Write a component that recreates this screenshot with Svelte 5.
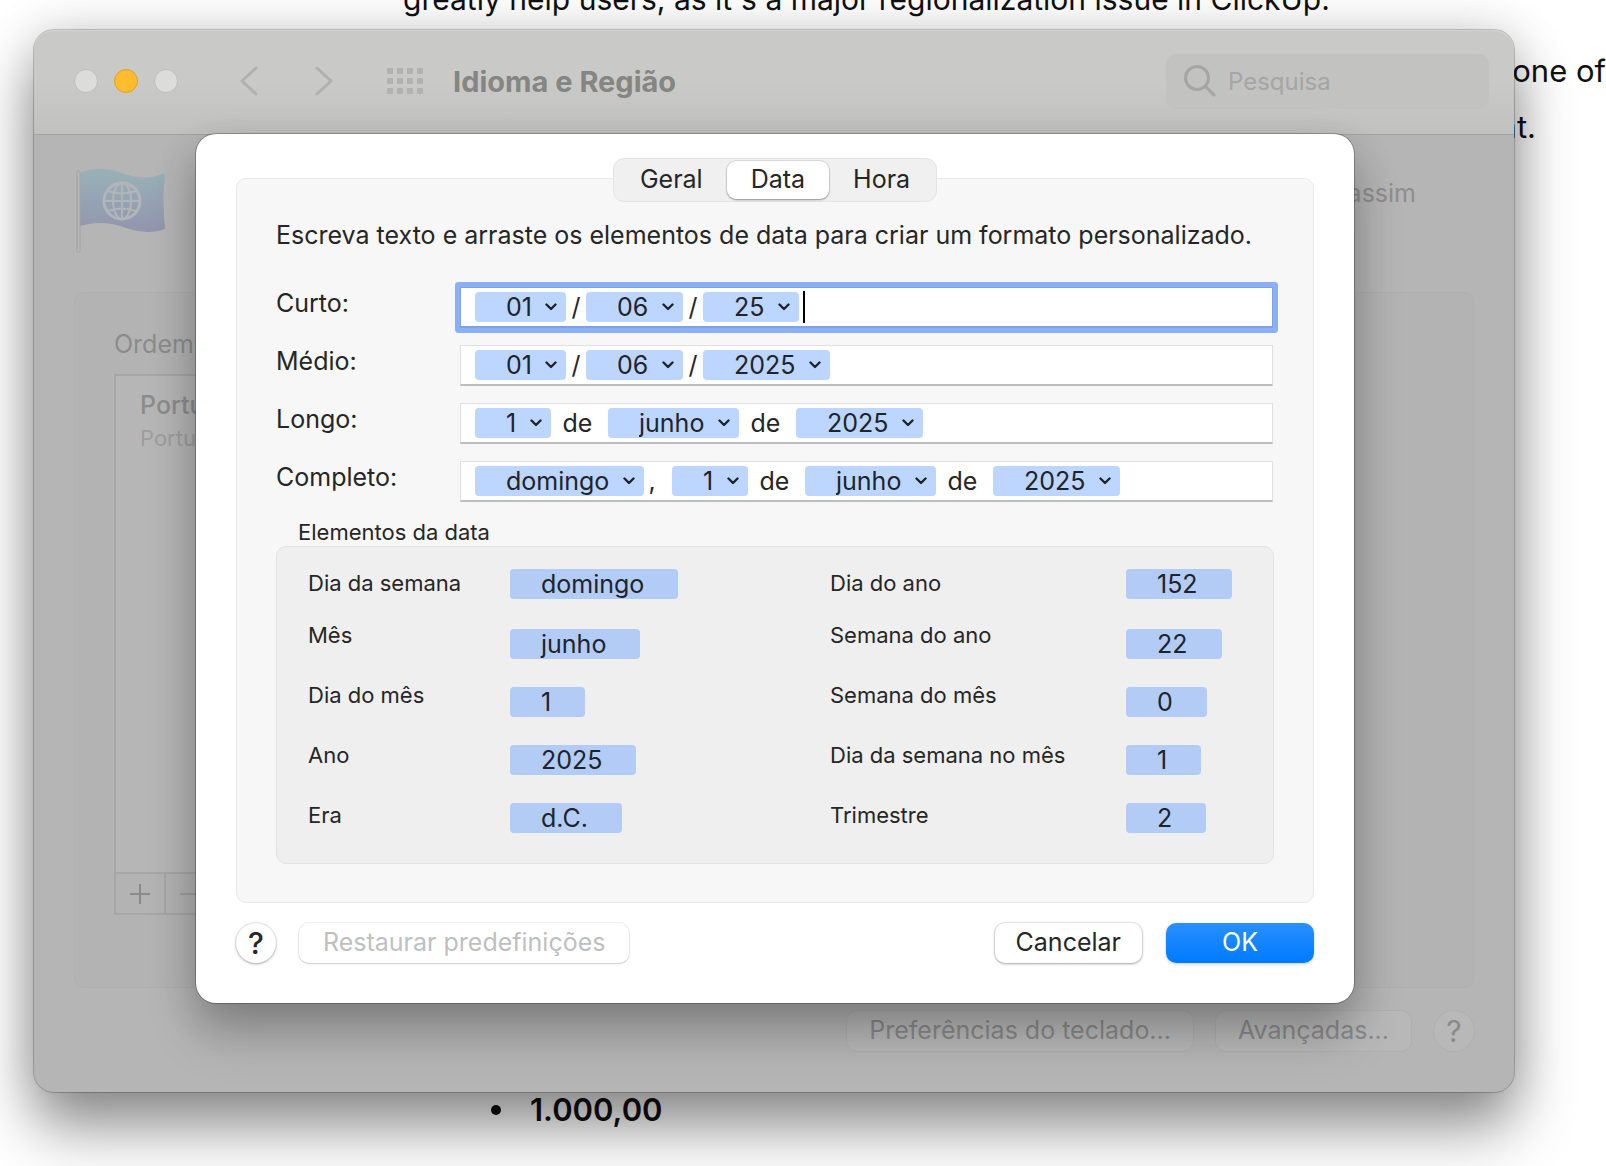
<script>
	const tabs = ['Geral', 'Data', 'Hora'];
	let activeTab = $state('Data');

	// each format is a list of draggable tokens with plain text between them
	const formats = [
		{ id: 'curto', label: 'Curto:', focused: true, parts: [{ token: '01' }, { text: '/' }, { token: '06' }, { text: '/' }, { token: '25' }] },
		{ id: 'medio', label: 'Médio:', parts: [{ token: '01' }, { text: '/' }, { token: '06' }, { text: '/' }, { token: '2025' }] },
		{ id: 'longo', label: 'Longo:', parts: [{ token: '1' }, { text: 'de', word: true }, { token: 'junho' }, { text: 'de', word: true }, { token: '2025' }] },
		{
			id: 'completo',
			label: 'Completo:',
			parts: [{ token: 'domingo' }, { text: ',', comma: true }, { token: '1' }, { text: 'de', word: true }, { token: 'junho' }, { text: 'de', word: true }, { token: '2025' }]
		}
	];

	const leftElements = [
		['Dia da semana', 'domingo'],
		['Mês', 'junho'],
		['Dia do mês', '1'],
		['Ano', '2025'],
		['Era', 'd.C.']
	];

	const rightElements = [
		['Dia do ano', '152'],
		['Semana do ano', '22'],
		['Semana do mês', '0'],
		['Dia da semana no mês', '1'],
		['Trimestre', '2']
	];
</script>

{#snippet elementColumns(items, group)}
	<div class="elements {group}">
		<div class="names">
			{#each items as [name]}
				<span>{name}</span>
			{/each}
		</div>
		<div class="values" role="list">
			{#each items as [name, value]}
				<span class="chip" draggable="true" role="listitem" aria-label={name}>{value}</span>
			{/each}
		</div>
	</div>
{/snippet}

<div class="desktop">
	<article class="page">
		<p class="intro">greatly help users, as it's a major regionalization issue in ClickUp.</p>
		<p class="line-end">one of</p>
		<p class="line-end short">nt.</p>
		<ul>
			<li>1.000,00</li>
		</ul>
	</article>

	<div class="window">
		<header class="titlebar">
			<div class="lights">
				<button aria-label="Fechar"></button>
				<button class="minimize" aria-label="Minimizar"></button>
				<button aria-label="Ampliar"></button>
			</div>
			<div class="nav">
				<button aria-label="Voltar">
					<svg width="18" height="30" viewBox="0 0 18 30"><path d="M16 2 2 15l14 13" /></svg>
				</button>
				<button aria-label="Avançar">
					<svg width="18" height="30" viewBox="0 0 18 30"><path d="m2 2 14 13L2 28" /></svg>
				</button>
			</div>
			<button class="all" aria-label="Mostrar tudo">
				<svg width="36" height="26" viewBox="0 0 36 26">
					{#each [0, 10, 20] as y}
						{#each [0, 10, 20, 30] as x}
							<rect {x} {y} width="6" height="6" rx="1" />
						{/each}
					{/each}
				</svg>
			</button>
			<h1>Idioma e Região</h1>
			<label class="search">
				<svg width="32" height="32" viewBox="0 0 32 32"><circle cx="13" cy="13" r="11.5" /><path d="m21.5 21.5 8.5 8.5" /></svg>
				<input type="text" placeholder="Pesquisa" aria-label="Pesquisa" />
			</label>
		</header>

		<div class="body">
			<div class="summary">
				<svg class="flag" width="92" height="86" viewBox="0 0 92 86">
					<defs>
						<linearGradient id="cloth" x1="0" y1="0" x2="0" y2="1">
							<stop offset="0" stop-color="#93b2b7" />
							<stop offset="0.5" stop-color="#8f9fb4" />
							<stop offset="1" stop-color="#8a8eac" />
						</linearGradient>
					</defs>
					<path d="M4 5C18-1 32 0 46 5s27 7 43 0c-2 18-2 36 0 56-14 5-28 3-42-2S19 54 4 58Z" fill="url(#cloth)" />
					<rect x="1" y="3" width="3" height="81" rx="1" fill="#b9b9b9" stroke="#a0a0a0" />
					<g fill="none" stroke="#b0b6ba" stroke-width="2">
						<circle cx="46" cy="33" r="18" stroke-width="3" />
						<ellipse cx="46" cy="33" rx="9" ry="18" />
						<path d="M46 15v36M28 33h36M32 23q14 5 28 0M32 43q14-5 28 0" />
					</g>
				</svg>
				<span>assim</span>
			</div>

			<section class="languages">
				<h2>Ordem</h2>
				<div class="list">
					<strong>Portu</strong>
					<small>Portu</small>
				</div>
				<div class="list-buttons">
					<button aria-label="Adicionar"><svg width="22" height="22" viewBox="0 0 22 22"><path d="M11 1v20M1 11h20" /></svg></button>
					<button class="off" aria-label="Remover"><svg width="22" height="22" viewBox="0 0 22 22"><path d="M1 11h20" /></svg></button>
				</div>
			</section>

			<footer class="window-actions">
				<button>Preferências do teclado...</button>
				<button>Avançadas...</button>
				<button class="help">?</button>
			</footer>
		</div>

		<div class="sheet" role="dialog" aria-label="Data">
			<div class="tabs" role="tablist">
				{#each tabs as tab}
					<button role="tab" aria-selected={tab === activeTab} class:active={tab === activeTab} onclick={() => (activeTab = tab)}>{tab}</button>
				{/each}
			</div>

			<div class="panel">
				<p class="hint">Escreva texto e arraste os elementos de data para criar um formato personalizado.</p>

				{#each formats as format}
					<div class="format">
						<label for={format.id}>{format.label}</label>
						<div class="field" class:focused={format.focused}>
							{#each format.parts as part}
								{#if part.token}
									<span class="token">
										<select aria-label={part.token}>
											<option>{part.token}</option>
										</select>
										<svg width="12" height="8" viewBox="0 0 12 8"><path d="m1.5 1.5 4.5 4.5 4.5-4.5" /></svg>
									</span>
								{:else}
									<span class="separator" class:word={part.word} class:comma={part.comma}>{part.text}</span>
								{/if}
							{/each}
							{#if format.focused}<span class="caret"></span>{/if}
							<input id={format.id} type="text" />
						</div>
					</div>
				{/each}

				<h3>Elementos da data</h3>
				<div class="box">
					{@render elementColumns(leftElements, 'basic')}
					{@render elementColumns(rightElements, 'extra')}
				</div>
			</div>

			<div class="actions">
				<button class="help">?</button>
				<button class="restore" disabled>Restaurar predefinições</button>
				<button class="cancel">Cancelar</button>
				<button class="ok">OK</button>
			</div>
		</div>
	</div>
</div>

<style>
	:global(body) {
		margin: 0;
		background: #fff;
		font-family: Inter, 'Liberation Sans', sans-serif;
		font-size: 25px;
		color: #262626;
	}
	* {
		box-sizing: border-box;
	}
	button,
	input,
	select {
		font: inherit;
		color: inherit;
		border: 0;
		padding: 0;
		margin: 0;
		background: none;
	}
	h1,
	h2,
	h3,
	p,
	ul {
		margin: 0;
		padding: 0;
	}
	svg {
		display: block;
		flex: none;
	}
	.desktop {
		position: relative;
		min-height: 100vh;
		padding: 30px 92px 0 34px;
		overflow: hidden;
	}

	/* document behind the window */
	.page {
		position: absolute;
		inset: -29px 0 0 0;
		display: flex;
		flex-direction: column;
		font-size: 31px;
		line-height: 56px;
		color: #111;
	}
	.intro {
		padding-left: 403px;
		padding-bottom: 16px;
		font-size: 30px;
	}
	.line-end {
		text-align: right;
	}
	.short {
		padding-right: 70px;
	}
	.page ul {
		margin-top: auto;
		margin-bottom: 28px;
		padding-left: 491px;
		list-style: none;
		font-weight: 600;
	}
	.page li {
		display: flex;
		align-items: center;
		gap: 29px;
	}
	.page li::before {
		content: '';
		width: 10px;
		height: 10px;
		border-radius: 50%;
		background: #111;
	}

	/* preferences window */
	.window {
		position: relative;
		border-radius: 20px;
		background: #b5b5b5;
		box-shadow:
			0 0 0 1px rgba(0, 0, 0, 0.2),
			0 0 50px rgba(0, 0, 0, 0.16),
			0 36px 60px rgba(0, 0, 0, 0.42);
	}
	.titlebar {
		display: flex;
		align-items: center;
		height: 105px;
		padding: 0 25px 2px 40px;
		border-radius: 20px 20px 0 0;
		border-bottom: 1px solid #a3a3a3;
		background: linear-gradient(#c9c9c7 50%, #c1c1bf);
		box-shadow: inset 0 1px #d5d5d3;
	}
	.lights {
		display: flex;
		gap: 16px;
	}
	.lights button {
		width: 24px;
		height: 24px;
		border-radius: 50%;
		border: 1px solid #bebebc;
		background: #dcdcda;
	}
	.lights .minimize {
		border-color: #e0a030;
		background: #febc2e;
	}
	.nav {
		display: flex;
		gap: 57px;
		margin-left: 62px;
	}
	.nav path {
		fill: none;
		stroke: #b0b0ae;
		stroke-width: 3;
		stroke-linecap: round;
		stroke-linejoin: round;
	}
	.all {
		margin-left: 54px;
	}
	.all rect {
		fill: #b1b1af;
	}
	h1 {
		margin-left: 30px;
		font-size: 29px;
		font-weight: 700;
		color: #858583;
	}
	.search {
		display: flex;
		align-items: center;
		gap: 12px;
		width: 323px;
		height: 55px;
		margin-left: auto;
		padding: 0 18px;
		border-radius: 10px;
		background: #c2c2c1;
		color: #a5a5a4;
	}
	.search svg {
		fill: none;
		stroke: #a5a5a4;
		stroke-width: 3;
		stroke-linecap: round;
	}
	.search input {
		width: 100%;
		min-width: 0;
		outline: none;
		font-size: 24px;
	}
	.search input::placeholder {
		color: #a5a5a4;
		opacity: 1;
	}
	.body {
		padding: 33px 40px 41px;
	}
	.summary {
		display: flex;
		justify-content: space-between;
		height: 124px;
		padding: 0 58px 0 2px;
		line-height: 50px;
		color: #8e8e8e;
	}
	.flag {
		opacity: 0.8;
	}
	.languages {
		height: 696px;
		padding: 33px 39px 72px;
		display: flex;
		flex-direction: column;
		border: 1px solid #afafaf;
		border-radius: 10px;
		background: #b3b3b3;
		color: #8c8c8c;
	}
	h2 {
		font-size: 25px;
		font-weight: 400;
		line-height: 36px;
	}
	.list {
		flex: 1;
		display: flex;
		flex-direction: column;
		width: 40%;
		margin-top: 12px;
		padding: 12px 24px;
		border: 2px solid #a6a6a6;
		background: #b6b6b6;
	}
	.list strong {
		font-weight: 500;
		line-height: 34px;
	}
	.list small {
		font-size: 22px;
		line-height: 32px;
		color: #9e9e9e;
	}
	.list-buttons {
		display: flex;
		width: 40%;
		height: 41px;
		border: 2px solid #a6a6a6;
		border-top: 0;
	}
	.list-buttons button {
		display: grid;
		place-items: center;
		width: 50px;
		border-right: 2px solid #a6a6a6;
	}
	.list-buttons path {
		stroke: #8a8a8a;
		stroke-width: 2;
	}
	.list-buttons .off path {
		stroke: #9e9e9e;
	}
	.window-actions {
		display: flex;
		justify-content: flex-end;
		gap: 23px;
		margin-top: 23px;
	}
	.window-actions button {
		height: 40px;
		padding: 0 22px 2px;
		border-radius: 10px;
		background: rgba(255, 255, 255, 0.05);
		box-shadow: 0 0 0 1px rgba(0, 0, 0, 0.03);
		color: #8a8a8a;
	}

	/* sheet attached under the title bar */
	.sheet {
		position: absolute;
		top: 104px;
		left: 162px;
		right: 160px;
		display: flex;
		flex-direction: column;
		padding: 24px 40px 40px;
		border-radius: 20px;
		background: #fff;
		box-shadow:
			0 0 0 1px rgba(0, 0, 0, 0.25),
			0 12px 40px rgba(0, 0, 0, 0.16),
			0 32px 50px rgba(0, 0, 0, 0.2);
	}
	.tabs {
		z-index: 1;
		display: flex;
		align-self: center;
		height: 44px;
		padding: 2px;
		border-radius: 11px;
		border: 1px solid #e4e4e4;
		background: #f0f0f0;
	}
	.tabs button {
		height: 38px;
		padding: 0 24px 2px;
		border-radius: 9px;
	}
	.tabs .active {
		background: #fff;
		box-shadow:
			0 0 0 1px rgba(0, 0, 0, 0.08),
			0 1px 2px rgba(0, 0, 0, 0.35);
	}
	.panel {
		margin-top: -24px;
		padding: 38px 39px;
		border: 1px solid #e9e9e9;
		border-radius: 10px;
		background: #f7f7f7;
	}
	.hint {
		margin-bottom: 33px;
		line-height: 36px;
		white-space: nowrap;
	}
	.format {
		display: flex;
		height: 58px;
	}
	.format label {
		width: 184px;
		line-height: 34px;
	}
	.field {
		flex: 1;
		display: flex;
		align-items: center;
		min-width: 0;
		height: 41px;
		margin: 1px 1px 0 0;
		padding-left: 14px;
		border: 1px solid #e0e0e0;
		border-bottom: 2px solid #bdbdbd;
		background: #fff;
	}
	.focused {
		border-color: #7ea2e6;
		box-shadow: 0 0 0 5px #8cb0f8;
		border-radius: 1px;
	}
	.token {
		display: grid;
		align-items: center;
	}
	.token select {
		grid-area: 1 / 1;
		appearance: none;
		height: 30px;
		padding: 0 34px 0 31px;
		border-radius: 4px;
		background: #bcd6ff;
		line-height: 30px;
		color: #1e242c;
	}
	.token svg {
		grid-area: 1 / 1;
		justify-self: end;
		margin-right: 9px;
		pointer-events: none;
	}
	.token path {
		fill: none;
		stroke: #1e242c;
		stroke-width: 2.4;
		stroke-linecap: round;
		stroke-linejoin: round;
	}
	.separator {
		width: 20px;
		text-align: center;
	}
	.word {
		width: 57px;
		padding-right: 4px;
	}
	.comma {
		width: 28px;
		padding-right: 12px;
	}
	.caret {
		width: 2px;
		height: 32px;
		margin-left: 4px;
		background: #000;
	}
	.field input {
		flex: 1;
		min-width: 0;
		padding-left: 4px;
		outline: none;
	}
	h3 {
		margin-left: 22px;
		font-size: 22px;
		font-weight: 400;
		line-height: 28px;
	}
	.box {
		display: flex;
		justify-content: space-between;
		height: 318px;
		padding: 22px 40px 28px 31px;
		border: 1px solid #e3e3e3;
		border-radius: 10px;
		background: #efefef;
	}
	.elements {
		display: flex;
	}
	.names {
		display: flex;
		flex-direction: column;
		gap: 32px;
		font-size: 22px;
		line-height: 28px;
	}
	.names span:first-child {
		margin-bottom: -8px;
	}
	.basic .names {
		width: 202px;
	}
	.extra .names {
		width: 296px;
	}
	.values {
		display: flex;
		flex-direction: column;
		align-items: flex-start;
		gap: 28px;
	}
	.extra .values {
		width: 107px;
	}
	.chip {
		height: 30px;
		padding: 0 34px 0 31px;
		border-radius: 4px;
		background: #b2ccf6;
		line-height: 30px;
		color: #1e242c;
	}
	.chip:first-child {
		margin-bottom: 2px;
	}
	.actions {
		display: flex;
		margin-top: 20px;
	}
	.actions button {
		height: 40px;
		padding: 0 21px 2px;
		border-radius: 10px;
		background: #fff;
		box-shadow:
			0 0 0 1px rgba(0, 0, 0, 0.07),
			0 1px 3px rgba(0, 0, 0, 0.3);
	}
	.actions .help,
	.window-actions .help {
		width: 40px;
		padding: 0;
		border-radius: 50%;
		font-size: 30px;
		font-weight: 500;
	}
	.window-actions .help {
		font-weight: 400;
	}
	.actions .restore {
		margin-left: 23px;
		padding: 0 24px 2px;
		color: #bfbfbf;
		box-shadow:
			0 0 0 1px rgba(0, 0, 0, 0.05),
			0 1px 2px rgba(0, 0, 0, 0.15);
	}
	.actions .cancel {
		margin-left: auto;
	}
	.actions .ok {
		width: 148px;
		margin-left: 24px;
		background: linear-gradient(#2a90ff, #007aff);
		box-shadow: 0 1px 3px rgba(0, 100, 255, 0.3);
		color: #fff;
	}
</style>
